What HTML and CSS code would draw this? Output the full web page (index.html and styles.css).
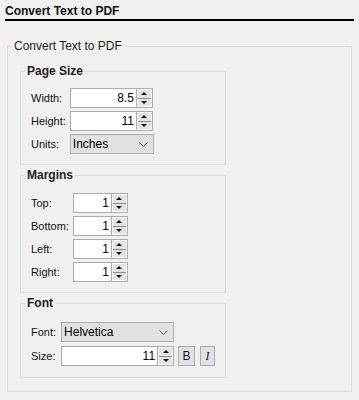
FILE: index.html
```html
<!DOCTYPE html>
<html lang="en">

<head>
    <meta charset="UTF-8">
    <meta name="viewport" content="width=device-width, initial-scale=1.0">
    <title>Convert Text to PDF</title>
    <link rel="stylesheet" href="styles.css">
</head>

<body>
    <div class="title">Convert Text to PDF</div>

    <fieldset class="group">
        <legend>Convert Text to PDF</legend>

        <!-- page size -->
        <fieldset class="section section-page">
            <legend>Page Size</legend>
            <div class="rows">
                <label>Width:</label>
                <div class="spin spin-page">
                    <span class="spin-value">8.5</span>
                    <span class="spin-btns"><span class="spin-up"></span><span class="spin-down"></span></span>
                </div>
                <label>Height:</label>
                <div class="spin spin-page">
                    <span class="spin-value">11</span>
                    <span class="spin-btns"><span class="spin-up"></span><span class="spin-down"></span></span>
                </div>
                <label>Units:</label>
                <div class="select select-units">
                    <span>Inches</span>
                    <svg width="9" height="5" viewBox="0 0 9 5"><polyline points="0.5,0.5 4.5,4.5 8.5,0.5" fill="none" stroke="#555" stroke-width="1"/></svg>
                </div>
            </div>
        </fieldset>

        <!-- margins -->
        <fieldset class="section section-margins">
            <legend>Margins</legend>
            <div class="rows">
                <label>Top:</label>
                <div class="spin spin-margin">
                    <span class="spin-value">1</span>
                    <span class="spin-btns"><span class="spin-up"></span><span class="spin-down"></span></span>
                </div>
                <label>Bottom:</label>
                <div class="spin spin-margin">
                    <span class="spin-value">1</span>
                    <span class="spin-btns"><span class="spin-up"></span><span class="spin-down"></span></span>
                </div>
                <label>Left:</label>
                <div class="spin spin-margin">
                    <span class="spin-value">1</span>
                    <span class="spin-btns"><span class="spin-up"></span><span class="spin-down"></span></span>
                </div>
                <label>Right:</label>
                <div class="spin spin-margin">
                    <span class="spin-value">1</span>
                    <span class="spin-btns"><span class="spin-up"></span><span class="spin-down"></span></span>
                </div>
            </div>
        </fieldset>

        <!-- font -->
        <fieldset class="section section-font">
            <legend>Font</legend>
            <div class="rows rows-font">
                <label>Font:</label>
                <div class="select select-font">
                    <span>Helvetica</span>
                    <svg width="9" height="5" viewBox="0 0 9 5"><polyline points="0.5,0.5 4.5,4.5 8.5,0.5" fill="none" stroke="#555" stroke-width="1"/></svg>
                </div>
                <label>Size:</label>
                <div class="size-row">
                    <div class="spin spin-size">
                        <span class="spin-value">11</span>
                        <span class="spin-btns"><span class="spin-up"></span><span class="spin-down"></span></span>
                    </div>
                    <span class="btn btn-bold">B</span>
                    <span class="btn btn-italic">I</span>
                </div>
            </div>
        </fieldset>
    </fieldset>
</body>

</html>
```

FILE: styles.css
```css
* {
    box-sizing: border-box;
}

body {
    margin: 0;
    background: #f0f0f0;
    font-family: "Liberation Sans", Arial, sans-serif;
    font-size: 11px;
    color: #111;
}

.title {
    margin: 0 5px;
    padding: 4px 0 1px;
    font-size: 12px;
    font-weight: bold;
    line-height: 14px;
    border-bottom: 2px solid #000;
}

fieldset {
    margin: 0;
    padding: 0;
    min-width: 0;
    border: 1px solid #dcdcdc;
}

legend {
    padding: 0 2px;
    margin-left: 4px;
    color: #1e1e1e;
}

/* outer group */
.group {
    margin: 18px 7px 0 7px;
    padding: 10px 0 13px 0;
}

.group > legend {
    font-size: 12px;
    line-height: 15px;
}

/* inner sections */
.section {
    width: 206px;
    margin-left: 12px;
    padding: 10px 0 10px 0;
}

.section + .section {
    margin-top: 3px;
}

.section > legend {
    font-size: 12px;
    font-weight: bold;
    line-height: 14px;
}

.section-margins {
    padding-top: 11px;
}

.section-font {
    padding-top: 12px;
    padding-bottom: 11px;
}

.rows {
    display: grid;
    grid-template-columns: auto auto;
    justify-content: start;
    align-items: center;
    column-gap: 4px;
    row-gap: 3px;
    padding-left: 10px;
}

.rows-font {
    column-gap: 5px;
    row-gap: 4px;
}

label {
    line-height: 20px;
}

/* spin boxes */
.spin {
    display: flex;
    height: 20px;
    border: 1px solid #acacac;
    background: #fff;
}

.spin-page {
    width: 83px;
}

.spin-margin {
    width: 55px;
}

.spin-size {
    width: 113px;
}

.spin-value {
    flex: 1;
    text-align: right;
    padding-right: 2px;
    line-height: 18px;
    font-size: 12px;
    color: #000;
}

.spin-btns {
    width: 16px;
    display: flex;
    flex-direction: column;
    border-left: 1px solid #acacac;
    padding: 1px;
    background: #fff;
}

.spin-up,
.spin-down {
    flex: 1;
    display: flex;
    align-items: center;
    justify-content: center;
    background: #e3e3e3;
}

.spin-up {
    border-bottom: 1px solid #8c8c8c;
}

.spin-up::after,
.spin-down::after {
    content: "";
    border-left: 3px solid transparent;
    border-right: 3px solid transparent;
}

.spin-up::after {
    border-bottom: 3px solid #111;
}

.spin-down::after {
    border-top: 3px solid #111;
}

/* drop downs */
.select {
    display: flex;
    align-items: center;
    justify-content: space-between;
    height: 20px;
    border: 1px solid #adadad;
    background: #e1e1e1;
    padding: 0 5px 0 2px;
    font-size: 12px;
    color: #000;
}

.select-units {
    width: 84px;
}

.select-font {
    width: 113px;
}

.size-row {
    display: flex;
    align-items: center;
}

.btn {
    display: flex;
    align-items: center;
    justify-content: center;
    height: 20px;
    border: 1px solid #adadad;
    background: #e1e1e1;
    font-size: 12px;
    color: #0a1a3a;
}

.btn-bold {
    width: 17px;
    margin-left: 4px;
}

.btn-italic {
    width: 15px;
    margin-left: 5px;
    font-family: "Liberation Serif", "Times New Roman", serif;
    font-style: italic;
}
```
